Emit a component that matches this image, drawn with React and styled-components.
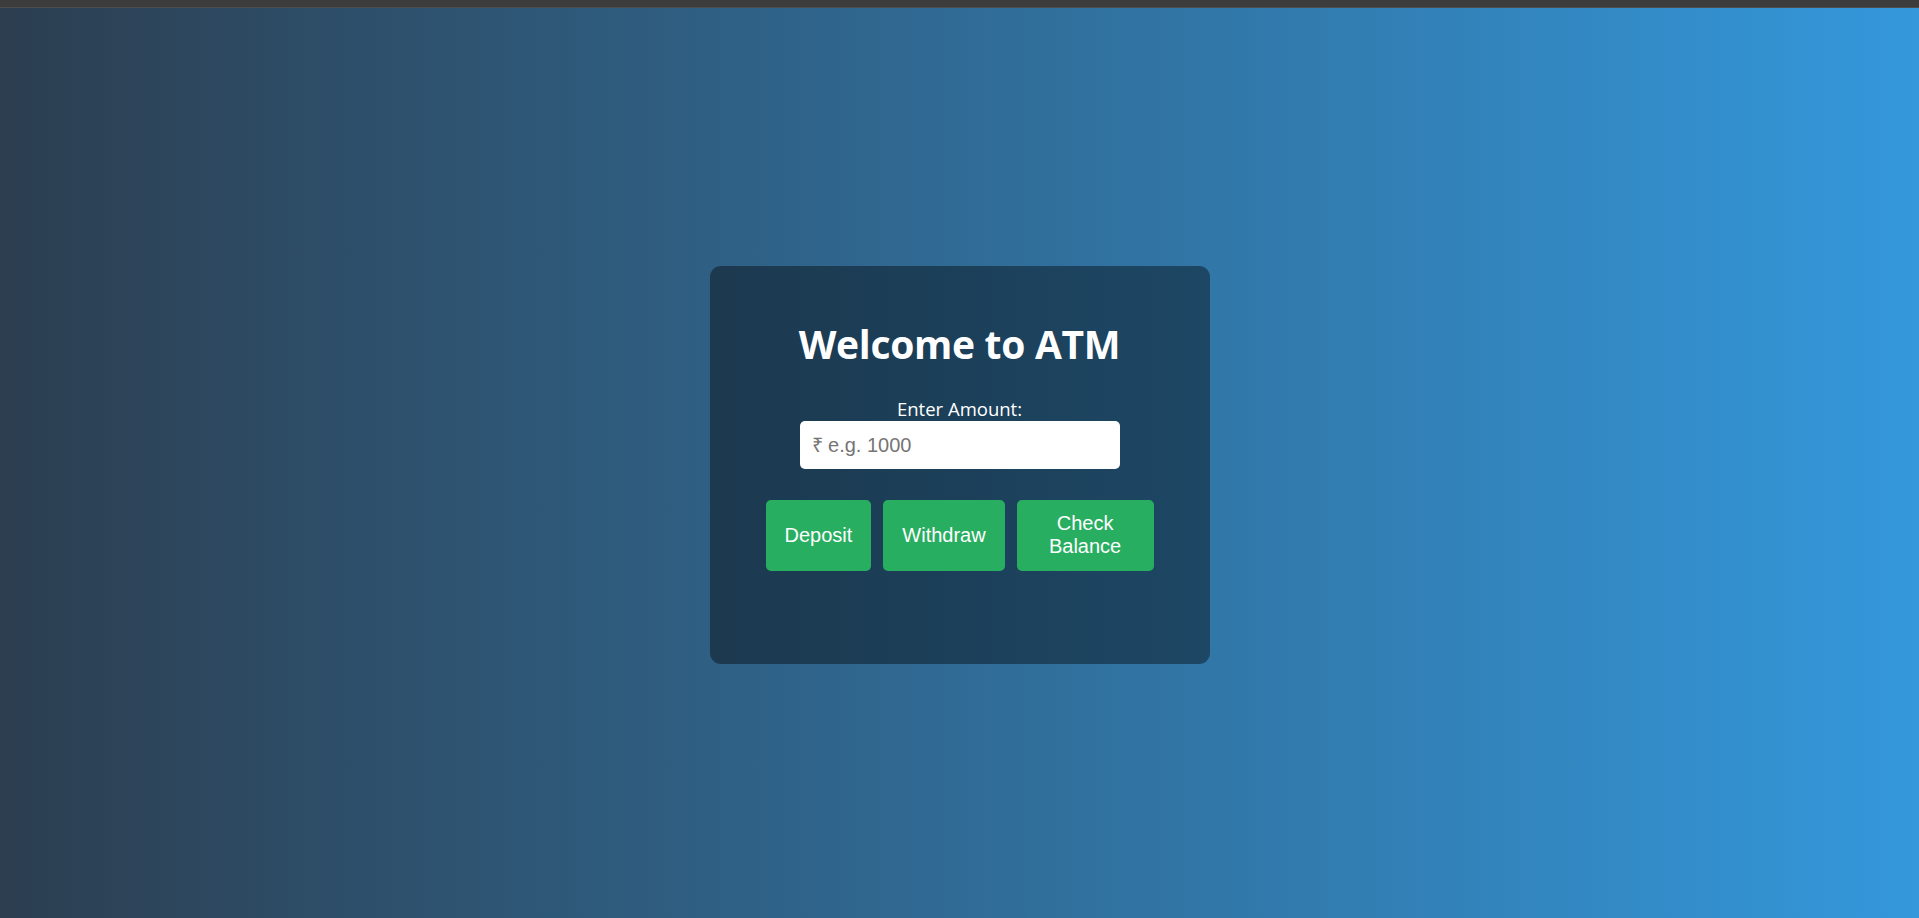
import styled, { createGlobalStyle } from "styled-components";

const GlobalStyle = createGlobalStyle`
  html, body {
    margin: 0;
    padding: 0;
    height: 100%;
  }
  body {
    font-family: "Open Sans", "Noto Sans", sans-serif;
    background: #2c3e50;
  }
  #root {
    height: 100%;
  }
`;

const Page = styled.div`
  display: flex;
  flex-direction: column;
  height: 918px;
`;

const TopStrip = styled.div`
  height: 7px;
  background: #3c3c3c;
  border-bottom: 1px solid #4d4d4d;
  flex-shrink: 0;
`;

const Main = styled.main`
  flex: 1;
  display: flex;
  align-items: center;
  justify-content: center;
  padding-top: 4px;
  background: linear-gradient(to right, #2c3e50, #3498db);
`;

const Card = styled.div`
  box-sizing: border-box;
  width: 500px;
  height: 398px;
  padding: 50px 50px;
  border-radius: 11px;
  background: rgba(0, 0, 0, 0.4);
  display: flex;
  flex-direction: column;
  align-items: center;
  color: #fff;
`;

const Title = styled.h1`
  margin: 0 0 27px;
  font-size: 39px;
  font-weight: 700;
  line-height: 55px;
  letter-spacing: -0.3px;
`;

const Label = styled.label`
  font-size: 18.5px;
  line-height: 22px;
  margin-bottom: 1px;
`;

const AmountInput = styled.input`
  box-sizing: border-box;
  width: 320px;
  height: 48px;
  padding: 0 12px;
  border: none;
  border-radius: 5px;
  font-family: "Liberation Sans", Arial, sans-serif;
  font-size: 20px;
  color: #333;
  background: #fff;
  outline: none;

  &::placeholder {
    color: #757575;
  }
`;

const ButtonRow = styled.div`
  display: flex;
  justify-content: center;
  width: 400px;
  margin-top: 31px;
`;

const ActionButton = styled.button`
  margin: 0 6px;
  padding: 12px 19px 13px;
  border: none;
  border-radius: 5px;
  background: #27ae60;
  color: #fff;
  font-family: "Liberation Sans", Arial, sans-serif;
  font-size: 20px;
  line-height: 23px;
  cursor: pointer;
`;

const actions = ["Deposit", "Withdraw", "Check Balance"];

export default function App() {
  return (
    <>
      <GlobalStyle />
      <Page>
        <TopStrip />
        <Main>
          <Card>
            <Title>Welcome to ATM</Title>
            <Label htmlFor="amount">Enter Amount:</Label>
            <AmountInput id="amount" type="number" placeholder="₹ e.g. 1000" />
            <ButtonRow>
              {actions.map((a) => (
                <ActionButton key={a}>{a}</ActionButton>
              ))}
            </ButtonRow>
          </Card>
        </Main>
      </Page>
    </>
  );
}
